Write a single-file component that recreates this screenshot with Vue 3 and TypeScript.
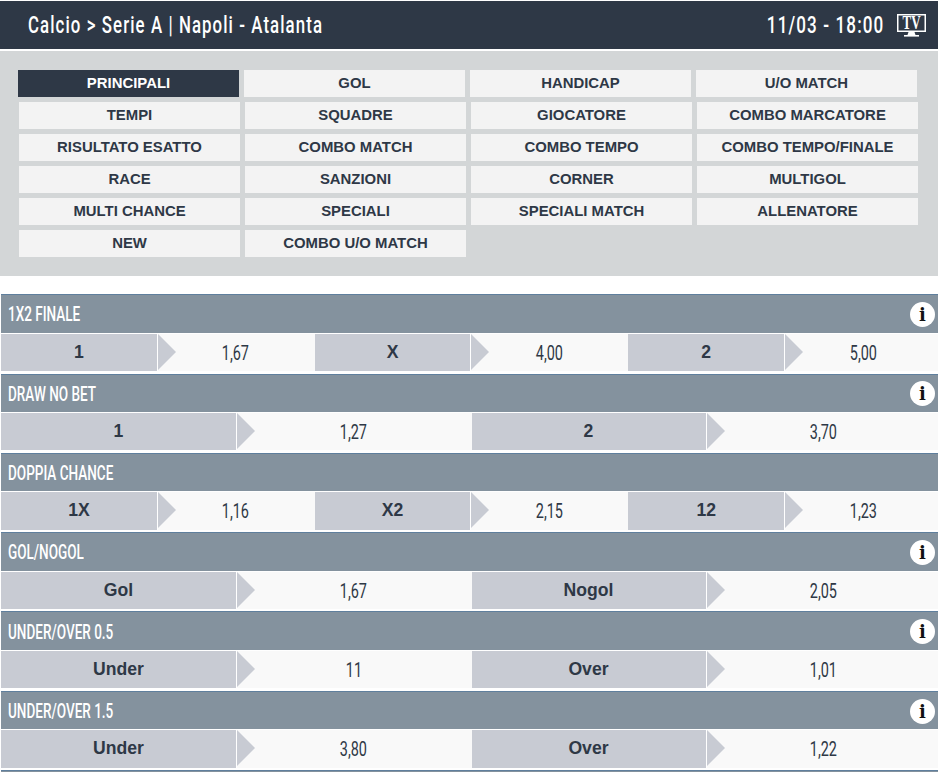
<script setup lang="ts">
interface Market {
  title: string
  info: boolean
  odds: [string, string][]
}

const tabs = [
  'PRINCIPALI', 'GOL', 'HANDICAP', 'U/O MATCH',
  'TEMPI', 'SQUADRE', 'GIOCATORE', 'COMBO MARCATORE',
  'RISULTATO ESATTO', 'COMBO MATCH', 'COMBO TEMPO', 'COMBO TEMPO/FINALE',
  'RACE', 'SANZIONI', 'CORNER', 'MULTIGOL',
  'MULTI CHANCE', 'SPECIALI', 'SPECIALI MATCH', 'ALLENATORE',
  'NEW', 'COMBO U/O MATCH',
]

const markets: Market[] = [
  { title: '1X2 FINALE', info: true, odds: [['1', '1,67'], ['X', '4,00'], ['2', '5,00']] },
  { title: 'DRAW NO BET', info: true, odds: [['1', '1,27'], ['2', '3,70']] },
  { title: 'DOPPIA CHANCE', info: false, odds: [['1X', '1,16'], ['X2', '2,15'], ['12', '1,23']] },
  { title: 'GOL/NOGOL', info: true, odds: [['Gol', '1,67'], ['Nogol', '2,05']] },
  { title: 'UNDER/OVER 0.5', info: true, odds: [['Under', '11'], ['Over', '1,01']] },
  { title: 'UNDER/OVER 1.5', info: true, odds: [['Under', '3,80'], ['Over', '1,22']] },
]
</script>

<template>
  <div class="page">
    <header class="topbar">
      <span class="crumb">Calcio &gt; Serie A | Napoli - Atalanta</span>
      <div class="when">
        <span class="date">11/03 - 18:00</span>
        <svg class="tv" width="29" height="23" viewBox="0 0 29 23">
          <rect x="0.75" y="0.75" width="27.5" height="16.5" fill="none" stroke="#fff" stroke-width="1.5" />
          <text x="14.5" y="15.2" text-anchor="middle" textLength="18" lengthAdjust="spacingAndGlyphs" class="tv-text">TV</text>
          <path d="M11.5 18h6l1 3h-8z" fill="#fff" />
          <path d="M7 21h15v1.6H7z" fill="#fff" />
        </svg>
      </div>
    </header>

    <nav class="tabs">
      <a v-for="(tab, i) in tabs" :key="tab" class="tab" :class="{ active: i === 0 }">{{ tab }}</a>
    </nav>

    <section v-for="m in markets" :key="m.title" class="market">
      <div class="market-head">
        <span class="market-title">{{ m.title }}</span>
        <span v-if="m.info" class="info">i</span>
      </div>
      <div class="market-row" :class="m.odds.length === 2 ? 'two' : 'three'">
        <div v-for="o in m.odds" :key="o[0]" class="odd">
          <div class="odd-label">{{ o[0] }}</div>
          <div class="odd-value"><span>{{ o[1] }}</span></div>
        </div>
      </div>
    </section>
    <!-- il mercato successivo resta tagliato dal fondo pagina -->
    <section class="market">
      <div class="market-head"></div>
    </section>
  </div>
</template>

<style>
html, body {
  background: #fff;
  overflow: hidden;
}
</style>

<style scoped>
.page {
  width: 938px;
  height: 772px;
  overflow: hidden;
  font-family: "Liberation Sans", Arial, sans-serif;
  color: #2e3846;
}

.topbar {
  margin-top: 1px;
  height: 48px;
  background: #2e3846;
  color: #fff;
  display: flex;
  align-items: center;
  justify-content: space-between;
  padding: 0 12px 0 28px;
  font-family: Roboto, sans-serif;
  font-weight: 500;
  font-size: 23px;
  letter-spacing: 1.5px;
  white-space: nowrap;
}

/* niente font condensato installato: si stringe il testo in orizzontale */
.crumb {
  display: inline-block;
  transform: scaleX(0.73);
  transform-origin: left center;
}

.when {
  display: flex;
  align-items: center;
  gap: 13px;
}

.date {
  display: inline-block;
  transform: scaleX(0.742);
  transform-origin: right center;
}

.tv {
  overflow: visible;
}

.tv-text {
  fill: #fff;
  font-family: "Liberation Serif", serif;
  font-size: 18px;
  font-weight: 700;
  letter-spacing: 0;
}

.tabs {
  margin-top: 2px;
  height: 225px;
  box-sizing: border-box;
  padding: 19px 20px 0 19px;
  background: #d3d6d7;
  display: grid;
  grid-template-columns: repeat(4, 221px);
  grid-auto-rows: 27px;
  gap: 5px;
}

.tab {
  background: #f3f3f3;
  font-size: 14.9px;
  font-weight: 700;
  line-height: 26px;
  text-align: center;
}

.tab:nth-child(-n+4) {
  margin: 0 1px 0 -1px;
}

.tab.active {
  background: #2e3846;
  color: #fff;
}

.market {
  margin-top: 2.53px;
  padding-left: 1px;
  width: 942px;
  box-sizing: border-box;
}

.tabs + .market {
  margin-top: 18.2px;
}

.market-head {
  height: 38.5px;
  box-sizing: border-box;
  border-top: 1px solid #5f7f9d;
  background: #84929e;
  color: #fff;
  display: flex;
  align-items: center;
  justify-content: space-between;
  padding: 1px 7px 0 7px;
  font-family: Roboto, sans-serif;
  font-weight: 500;
  font-size: 20.5px;
  white-space: nowrap;
}

.market-title {
  display: inline-block;
  transform: scaleX(0.66);
  transform-origin: left center;
}

.info {
  width: 25px;
  height: 25px;
  border-radius: 50%;
  background: #fff;
  color: #111;
  font-family: "DejaVu Serif", serif;
  font-size: 18px;
  font-weight: 700;
  line-height: 25px;
  text-align: center;
}

.market-row {
  display: grid;
  margin-top: 1px;
  height: 37.3px;
}

.market-row.three {
  grid-template-columns: repeat(3, 1fr);
}

.market-row.two {
  grid-template-columns: repeat(2, 1fr);
}

.odd {
  display: grid;
  grid-template-columns: 1fr 1fr;
  height: 37.3px;
}

.market-row.two .odd:first-child {
  grid-template-columns: 236px 1fr;
}

.market-row.two .odd:last-child {
  grid-template-columns: 235px 1fr;
}

.odd-label {
  position: relative;
  box-sizing: border-box;
  height: 37.3px;
  border-right: 1px solid #fff;
  background: #c8cbd3;
  font-size: 17.6px;
  font-weight: 700;
  line-height: 36px;
  text-align: center;
}

/* freccia tra etichetta e quota */
.odd-label::after {
  content: "";
  position: absolute;
  top: 0;
  left: calc(100% + 1px);
  border-style: solid;
  border-width: 18.5px 0 18.5px 18px;
  border-color: transparent transparent transparent #c8cbd3;
}

.odd-value {
  box-sizing: border-box;
  height: 37.3px;
  padding-top: 2px;
  background: #f9f9f9;
  font-family: Roboto, sans-serif;
  font-size: 19.5px;
  line-height: 35.3px;
  text-align: center;
}

.odd-value span {
  display: inline-block;
  transform: scaleX(0.74);
  margin-right: 1px;
}
</style>
